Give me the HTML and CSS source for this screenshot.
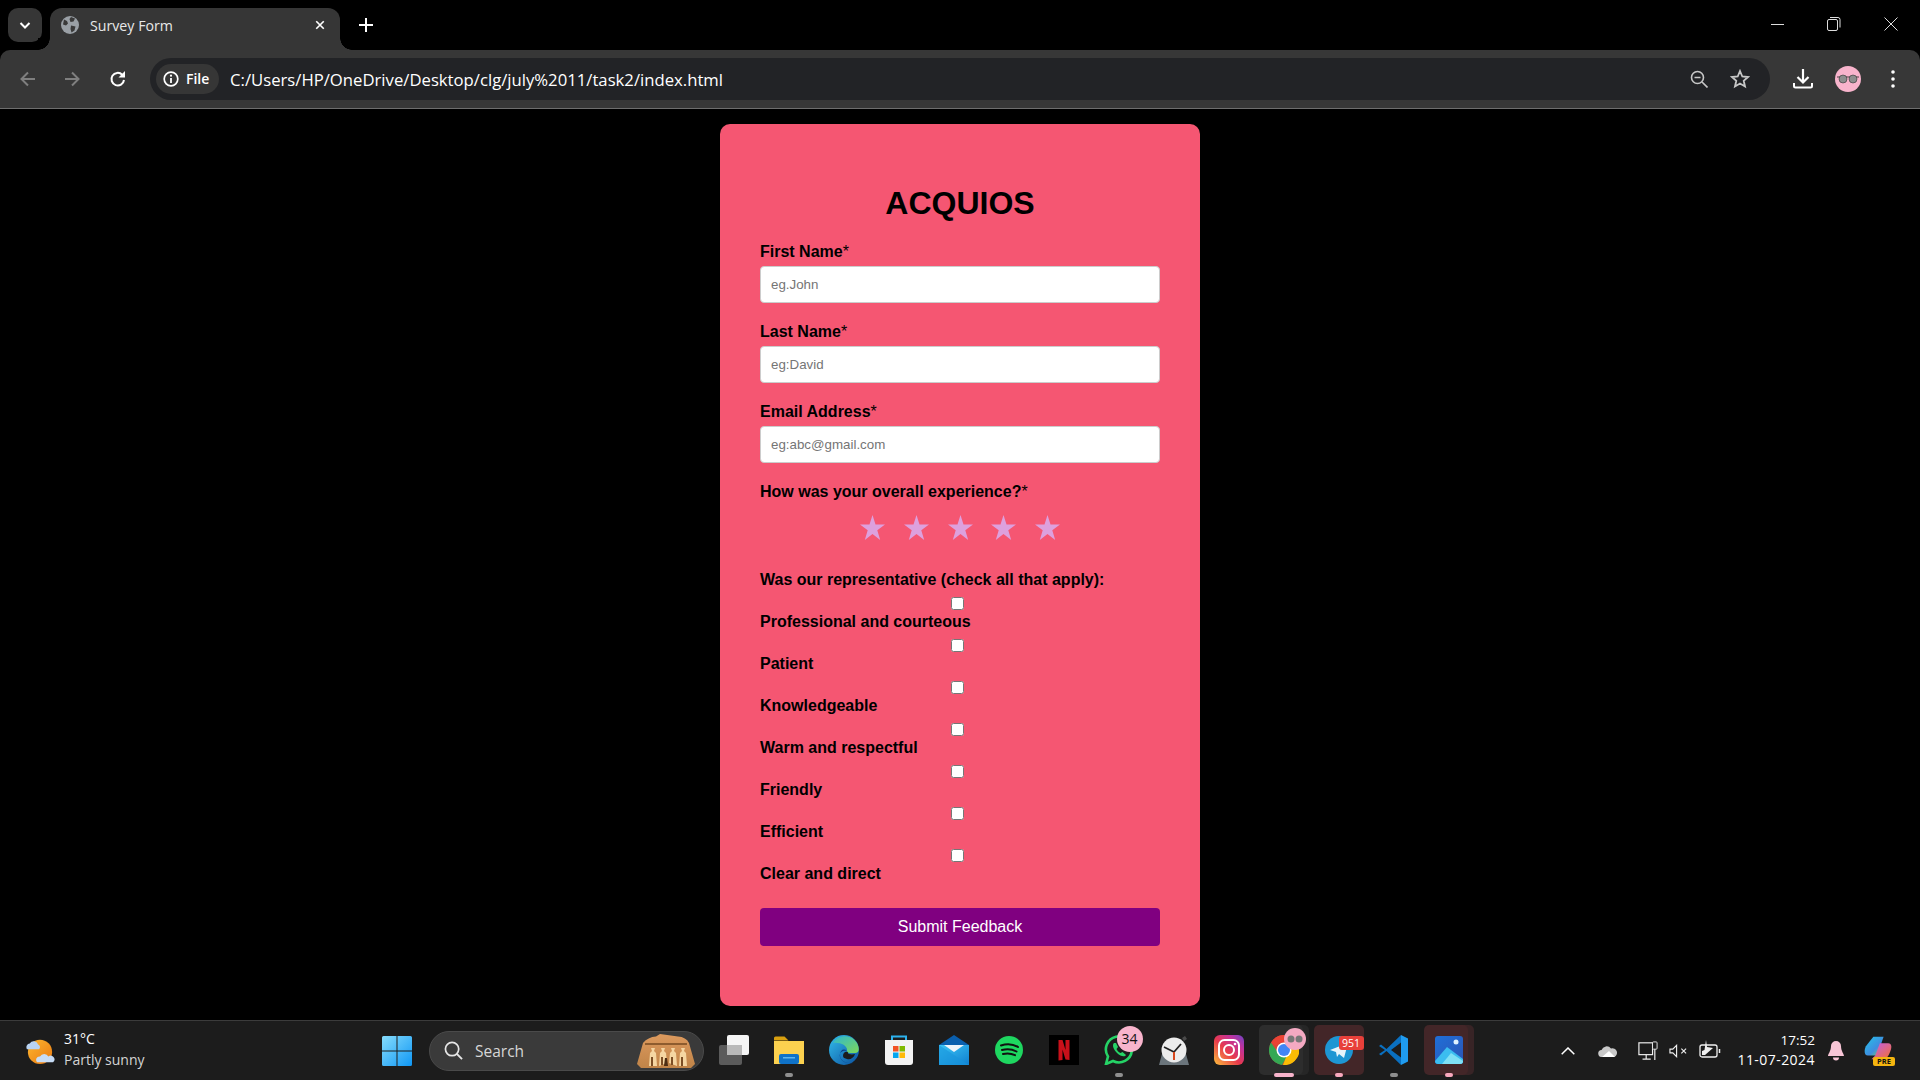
FILE: index.html
```html
<!DOCTYPE html>
<html lang="en">
<head>
<meta charset="utf-8">
<title>Survey Form</title>
<link rel="stylesheet" href="styles.css">
</head>
<body>
<header class="chrome">
  <div class="tabstrip">
    <button class="tabsearch" aria-label="Search tabs">
      <svg class="ic14" viewBox="0 0 14 14"><path d="M2.5 5l4.5 4.5L11.5 5" fill="none" stroke="#fff" stroke-width="2"/></svg>
    </button>
    <div class="tab">
      <svg class="favicon" viewBox="0 0 18 18"><circle cx="9" cy="9" r="9" fill="#9aa0a6"/><path d="M3 3.5l3 1.5 1 2.5-2 2-3-1zM10 1l4 1.5-1.5 3-3 .5-1-3zM10 9.500l4.500 1-1 4-3 2-1-3.500z" fill="#3a3a3a"/></svg>
      <span class="tabtitle">Survey Form</span>
      <svg class="tabclose" viewBox="0 0 12 12"><path d="M1.500 1.500l9 9M10.500 1.500l-9 9" stroke="#fff" stroke-width="2"/></svg>
    </div>
    <svg class="newtab" viewBox="0 0 14 14"><path d="M7 0v14M0 7h14" stroke="#fff" stroke-width="2"/></svg>
    <div class="winctl">
      <svg class="wc wc-min" viewBox="0 0 14 14"><path d="M0 7.500h13" stroke="#ddd" stroke-width="1"/></svg>
      <svg class="wc" viewBox="0 0 14 14"><rect x=".5" y="2.500" width="10" height="11" rx="1.500" fill="none" stroke="#ddd"/><path d="M3 .5h8a2 2 0 0 1 2 2v8" fill="none" stroke="#ddd"/></svg>
      <svg class="wc" viewBox="0 0 14 14"><path d="M.5.5l13 13M13.500.5l-13 13" stroke="#ddd"/></svg>
    </div>
  </div>
  <div class="toolbar">
    <svg class="navic" viewBox="0 0 18 18"><path d="M16 9H3M9 2.500L2.500 9 9 15.500" fill="none" stroke="#7f7f7f" stroke-width="2"/></svg>
    <svg class="navic fwd" viewBox="0 0 18 18"><path d="M2 9h13M9 2.500L15.500 9 9 15.500" fill="none" stroke="#7f7f7f" stroke-width="2"/></svg>
    <svg class="navic reload" viewBox="0 0 18 18"><path d="M15 10a6.300 6.300 0 1 1-1.800-5.300L15 6.500" fill="none" stroke="#fff" stroke-width="2"/><path d="M16 1v6.500H9.500z" fill="#fff"/></svg>
    <div class="omnibox">
      <div class="chip">
        <svg class="info" viewBox="0 0 16 16"><circle cx="8" cy="8" r="6.800" fill="none" stroke="#fff" stroke-width="1.700"/><path d="M8 7v5" stroke="#fff" stroke-width="1.800"/><circle cx="8" cy="4.700" r="1.100" fill="#fff"/></svg>
        <span class="chiptext">File</span>
      </div>
      <span class="url">C:/Users/HP/OneDrive/Desktop/clg/july%2011/task2/index.html</span>
      <svg class="omniic" viewBox="0 0 18 18"><circle cx="7.500" cy="7.500" r="6" fill="none" stroke="#c7c7c7" stroke-width="1.600"/><path d="M4.500 7.500h6M12 12l5.500 5.500" stroke="#c7c7c7" stroke-width="1.600"/></svg>
      <svg class="omniic star" viewBox="0 0 20 20"><path d="M10 2l2.300 5.500 5.700.5-4.300 3.800 1.300 5.700L10 14.500 5 17.500l1.300-5.700L2 8l5.700-.5z" fill="none" stroke="#c7c7c7" stroke-width="1.800"/></svg>
    </div>
    <svg class="dl" viewBox="0 0 20 20"><path d="M10 0v13M4.500 8L10 13.500 15.500 8" fill="none" stroke="#fff" stroke-width="2.200"/><path d="M1 14v3a1.500 1.500 0 0 0 1.500 1.500h15A1.500 1.500 0 0 0 19 17v-3" fill="none" stroke="#fff" stroke-width="2"/></svg>
    <svg class="avatar" viewBox="0 0 26 26"><circle cx="13" cy="13" r="13" fill="#f8b4cc"/><path d="M2 11h22" stroke="#222" stroke-width=".8"/><circle cx="8" cy="13" r="4" fill="#8d8d8d" stroke="#333" stroke-width=".6"/><circle cx="18" cy="13" r="4" fill="#8d8d8d" stroke="#333" stroke-width=".6"/></svg>
    <svg class="dots" viewBox="0 0 4 18"><circle cx="2" cy="2" r="1.800" fill="#fff"/><circle cx="2" cy="9" r="1.800" fill="#fff"/><circle cx="2" cy="16" r="1.800" fill="#fff"/></svg>
  </div>
</header>

<main class="page">
  <form class="card">
    <h1 class="title">ACQUIOS</h1>
    <div class="field">
      <label class="flabel" for="fn">First Name<span class="req">*</span></label>
      <input class="tinput" id="fn" type="text" placeholder="eg.John">
    </div>
    <div class="field">
      <label class="flabel" for="ln">Last Name<span class="req">*</span></label>
      <input class="tinput" id="ln" type="text" placeholder="eg:David">
    </div>
    <div class="field">
      <label class="flabel" for="em">Email Address<span class="req">*</span></label>
      <input class="tinput" id="em" type="email" placeholder="eg:abc@gmail.com">
    </div>
    <div class="qlabel">How was your overall experience?<span class="req">*</span></div>
    <div class="stars">
      <svg class="rstar" viewBox="0 0 25 25"><path d="M12.500 0l3 9.500h9.500l-7.700 5.800 2.900 9.700-7.700-6-7.700 6 2.900-9.700L0 9.500h9.500z"/></svg>
      <svg class="rstar" viewBox="0 0 25 25"><path d="M12.500 0l3 9.500h9.500l-7.700 5.800 2.900 9.700-7.700-6-7.700 6 2.900-9.700L0 9.500h9.500z"/></svg>
      <svg class="rstar" viewBox="0 0 25 25"><path d="M12.500 0l3 9.500h9.500l-7.700 5.800 2.900 9.700-7.700-6-7.700 6 2.900-9.700L0 9.500h9.500z"/></svg>
      <svg class="rstar" viewBox="0 0 25 25"><path d="M12.500 0l3 9.500h9.500l-7.700 5.800 2.900 9.700-7.700-6-7.700 6 2.900-9.700L0 9.500h9.500z"/></svg>
      <svg class="rstar" viewBox="0 0 25 25"><path d="M12.500 0l3 9.500h9.500l-7.700 5.800 2.900 9.700-7.700-6-7.700 6 2.900-9.700L0 9.500h9.500z"/></svg>
    </div>
    <div class="qlabel checkhead">Was our representative (check all that apply):</div>
    <label class="check"><input type="checkbox"><span>Professional and courteous</span></label>
    <label class="check"><input type="checkbox"><span>Patient</span></label>
    <label class="check"><input type="checkbox"><span>Knowledgeable</span></label>
    <label class="check"><input type="checkbox"><span>Warm and respectful</span></label>
    <label class="check"><input type="checkbox"><span>Friendly</span></label>
    <label class="check"><input type="checkbox"><span>Efficient</span></label>
    <label class="check"><input type="checkbox"><span>Clear and direct</span></label>
    <button class="submit" type="button">Submit Feedback</button>
  </form>
</main>

<footer class="taskbar">
  <div class="weather">
    <svg class="wxic" viewBox="0 0 32 30"><defs><linearGradient id="sun" x1="0" y1="0" x2="1" y2="1"><stop offset="0" stop-color="#fdb62f"/><stop offset="1" stop-color="#ea7a12"/></linearGradient></defs><circle cx="16" cy="16" r="13" fill="url(#sun)"/><path d="M2 13a4 4 0 0 1 3-6 5 5 0 0 1 9 1 3 3 0 0 1 1 5z" fill="#b9d3f2"/><path d="M13 27a3.500 3.500 0 0 1 3-6 5 5 0 0 1 9 0 3 3 0 0 1 5 6z" fill="#c7dcf6"/></svg>
    <div class="wxtext"><span class="wxtemp">31°C</span><span class="wxdesc">Partly sunny</span></div>
  </div>
  <div class="start">
    <svg class="ic30" viewBox="0 0 30 30"><defs><linearGradient id="win" x1="0" y1="0" x2="1" y2="1"><stop offset="0" stop-color="#86dcfc"/><stop offset="1" stop-color="#0f97f5"/></linearGradient></defs><path fill="url(#win)" d="M0 1.500A1.500 1.500 0 0 1 1.500 0h13v14.500H0zM15.500 0h13A1.500 1.500 0 0 1 30 1.500v13H15.500zM0 15.500h14.500V30h-13A1.500 1.500 0 0 1 0 28.500zM15.500 15.500H30v13a1.500 1.500 0 0 1-1.500 1.500h-13z"/></svg>
  </div>
  <div class="search">
    <svg class="searchic" viewBox="0 0 20 20"><circle cx="8.500" cy="8.500" r="7" fill="none" stroke="#e6e6e6" stroke-width="1.800"/><path d="M13.500 13.500l5.500 5.500" stroke="#e6e6e6" stroke-width="2"/></svg>
    <span class="searchtext">Search</span>
    <svg class="temple" viewBox="0 0 60 34"><defs><linearGradient id="sand" x1="0" y1="0" x2="0" y2="1"><stop offset="0" stop-color="#dd9a5e"/><stop offset="1" stop-color="#c08448"/></linearGradient></defs><path d="M7 9Q12 3 20 2.500L24 0l18 2.500Q50 3 53 9l6 21-4 4H5l-4-4z" fill="url(#sand)"/><path d="M9 9h42v2H9z" fill="#8e5c2e"/><path d="M13 32l1-13 2-2-1-3h4l-1 3 2 2 1 13zM23 32l1-13 2-2-1-3h4l-1 3 2 2 1 10zM33 29l1-10 2-2-1-3h4l-1 3 2 2 1 13zM43 32l1-13 2-2-1-3h4l-1 3 2 2 1 13z" fill="#f5d6a2"/><path d="M28 32l1-8h2l1 8z" fill="#4d2e14"/><path d="M15 32v-9h2v9zM45 32v-9h2v9zM25 31v-8h2v8zM35 31v-8h2v8z" fill="#7c4e25"/></svg>
  </div>
  <div class="apps">
    <div class="app">
      <svg class="ic30" viewBox="0 0 30 30"><rect x="0" y="10" width="23" height="20" rx="2" fill="#5b5b5b"/><rect x="8" y="0" width="22" height="20" rx="2" fill="#f5f5f5"/><rect x="8" y="10" width="15" height="10" fill="#b9b9b9"/></svg>
    </div>
    <div class="app">
      <svg class="ic30" viewBox="0 0 30 30"><path d="M0 3a1.500 1.500 0 0 1 1.500-1.500h9l4 4H0z" fill="#d9a00f"/><path d="M0 6h30v23H0z" fill="#fcd14f"/><rect x="5" y="19" width="20" height="10" rx="2" fill="#0f72c8"/><rect x="9" y="22" width="12" height="1.500" fill="#5cb5ef"/></svg>
      <i class="pip"></i>
    </div>
    <div class="app">
      <svg class="ic30" viewBox="0 0 30 30"><defs><linearGradient id="edg" x1="0" y1="0" x2="1" y2="1"><stop offset="0" stop-color="#33bdec"/><stop offset="1" stop-color="#0a4f9e"/></linearGradient><linearGradient id="edg2" x1="0" y1="0" x2="1" y2="1"><stop offset="0" stop-color="#2fb7cf"/><stop offset="1" stop-color="#7ed957"/></linearGradient></defs><circle cx="15" cy="15" r="15" fill="url(#edg)"/><path d="M4 8C8 0 22-2 28 8c3 6 2 10-2 10-6 0-8 0-8-2 1-5-6-9-14-8z" fill="url(#edg2)"/><path d="M18 16c-5-1-8 2-7 6s6 7 13 6c-8 1-13-3-13-8 0-5 4-7 7-4z" fill="#0b3f86"/><path d="M14 21c0-3 2-5 5-4-1 2 3 3 7 2-1 4-5 6-8 5-2-.5-4-1-4-3z" fill="#1c1c1c"/></svg>
    </div>
    <div class="app">
      <svg class="ic30" viewBox="0 0 30 30"><path d="M8 5V1.500h14V5" fill="none" stroke="#2cb2ee" stroke-width="2"/><path d="M1 5h28v22a3 3 0 0 1-3 3H4a3 3 0 0 1-3-3z" fill="#f3f3f3"/><rect x="9" y="11" width="5.500" height="5.500" fill="#f25325"/><rect x="15.500" y="11" width="5.500" height="5.500" fill="#7fba00"/><rect x="9" y="17.500" width="5.500" height="5.500" fill="#05a6f0"/><rect x="15.500" y="17.500" width="5.500" height="5.500" fill="#ffba08"/></svg>
    </div>
    <div class="app">
      <svg class="ic30" viewBox="0 0 30 30"><defs><linearGradient id="ml" x1="0" y1="0" x2="1" y2="1"><stop offset="0" stop-color="#3cc6f6"/><stop offset="1" stop-color="#0f7fd0"/></linearGradient></defs><path d="M15 0l15 10H0z" fill="#0a5fae"/><path d="M0 10h30v20H0z" fill="url(#ml)"/><path d="M5 10h20l-10 7z" fill="#eef4fa"/><path d="M0 10l30 20H0z" fill="#1795dc" opacity=".6"/></svg>
    </div>
    <div class="app">
      <svg class="ic30" viewBox="0 0 30 30"><circle cx="15" cy="15" r="14" fill="#1ed760"/><path d="M7 10.500c6-2 12-1.500 17 1.500M8 15c5-1.500 10-1 14.500 1.500M9 19c4-1 8-.8 12 1.200" fill="none" stroke="#111" stroke-width="2" stroke-linecap="round"/></svg>
    </div>
    <div class="app">
      <svg class="ic30" viewBox="0 0 30 30"><rect width="30" height="30" fill="#000"/><path d="M9.500 5h4l3 10V5h4v20l-4-.5-3-10V25l-4 .5z" fill="#c8101a"/></svg>
    </div>
    <div class="app">
      <svg class="ic30" viewBox="0 0 30 30"><path d="M2 29l2-7.500A13 13 0 1 1 9 26z" fill="none" stroke="#25d366" stroke-width="2.600"/><path d="M10 8c-2 2-1 6 3 10s8 4 9 2l-3.500-3-2 1c-2-1-3.500-2.500-4-4l1.500-2-2-4z" fill="#25d366"/></svg>
      <span class="badge wa">34</span>
      <i class="pip"></i>
    </div>
    <div class="app">
      <svg class="ic30" viewBox="0 0 30 30"><path d="M23 3l3-2 2 3-3 2z" fill="#4a4a4a"/><path d="M6 8L0 30h30L24 8z" fill="#6b757c"/><circle cx="15" cy="15" r="12.500" fill="#ececec"/><path d="M15 17L5 12M15 17l7-8" stroke="#222" stroke-width="1.800"/><path d="M15 17v8" stroke="#d8481e" stroke-width="2"/></svg>
    </div>
    <div class="app">
      <svg class="ic30" viewBox="0 0 30 30"><defs><linearGradient id="ig" x1="0" y1="1" x2="1" y2="0"><stop offset="0" stop-color="#fdc13b"/><stop offset=".45" stop-color="#e8394c"/><stop offset=".75" stop-color="#c1329c"/><stop offset="1" stop-color="#6a44c8"/></linearGradient></defs><rect width="30" height="30" rx="6" fill="url(#ig)"/><rect x="5" y="5" width="20" height="20" rx="5.500" fill="none" stroke="#fff" stroke-width="2"/><circle cx="15" cy="15" r="5" fill="none" stroke="#fff" stroke-width="2"/><circle cx="21" cy="9" r="1.300" fill="#fff"/></svg>
    </div>
    <div class="app">
      <i class="hl hl-gray"></i>
      <svg class="ic30 above" viewBox="0 0 30 30"><circle cx="15" cy="15" r="15" fill="#db4437"/><path d="M2 8a15 15 0 0 1 26-1H15a8 8 0 0 0-7 4z" fill="#ea4335"/><path d="M2 7.500A15 15 0 0 0 13 30l6-10-8 .5z" fill="#34a853"/><path d="M28 7H15l6 5-7 18A15 15 0 0 0 28 7z" fill="#fbbc05"/><circle cx="15" cy="15" r="7.500" fill="#fff"/><circle cx="15" cy="15" r="6" fill="#4285f4"/></svg>
      <svg class="avbadge" viewBox="0 0 22 22"><circle cx="11" cy="11" r="11" fill="#f4a9c2"/><circle cx="7" cy="11" r="3.500" fill="#777"/><circle cx="15" cy="11" r="3.500" fill="#777"/></svg>
      <i class="pip pip-wide"></i>
    </div>
    <div class="app">
      <i class="hl hl-red"></i>
      <svg class="ic30 above" viewBox="0 0 30 30"><circle cx="15" cy="15" r="14" fill="#1e96d3"/><path d="M6 15l18-7-4 15-5-4-2 3-1-5z" fill="#e8f5fb"/></svg>
      <span class="badge tg">951</span>
      <i class="pip pip-pink"></i>
    </div>
    <div class="app">
      <svg class="ic30" viewBox="0 0 30 30"><path d="M22 0l7 3.500v23L22 30z" fill="#1f9cf0"/><path d="M22 0L7.500 14 2 9.500 0 11l6 4-6 4 2 1.500 5.500-4.500L22 30v-7.500L12 15 22 7.500z" fill="#0a70c0"/></svg>
      <i class="pip"></i>
    </div>
    <div class="app">
      <i class="hl hl-red hl-stack"></i>
      <svg class="ic30 above" viewBox="0 0 30 30"><defs><linearGradient id="ph" x1="0" y1="0" x2="1" y2="1"><stop offset="0" stop-color="#1f6fd8"/><stop offset="1" stop-color="#2c55b5"/></linearGradient></defs><rect x="1" y="1" width="28" height="28" rx="3" fill="url(#ph)"/><circle cx="22" cy="7" r="2.500" fill="#dff2ff"/><path d="M1 26l12-14 16 12v2a3 3 0 0 1-3 3H4a3 3 0 0 1-3-3z" fill="#3bbdf0"/><path d="M8 29l9-11 12 8a3 3 0 0 1-3 3z" fill="#7fe0f5"/></svg>
      <i class="pip pip-pink"></i>
    </div>
  </div>
  <div class="tray">
    <svg class="t-chev" viewBox="0 0 14 8"><path d="M.7 7.300L7 1l6.300 6.300" fill="none" stroke="#fff" stroke-width="1.500"/></svg>
    <svg class="t-cloud" viewBox="0 0 20 12"><path d="M4 12a3.500 3.500 0 0 1-.5-7A5.500 5.500 0 0 1 13 3.500 4.200 4.200 0 0 1 16 12z" fill="#c9c9c9"/><path d="M4 12l7-6 6 6z" fill="#fff"/></svg>
    <svg class="t-net" viewBox="0 0 22 22"><rect x="1" y="2" width="15" height="13" fill="none" stroke="#f0f0f0" stroke-width="1.300"/><path d="M5 20h9M9 15v5" stroke="#f0f0f0" stroke-width="1.300"/><rect x="16" y="1" width="5" height="8" rx="1" fill="#1c1c1c" stroke="#f0f0f0"/><path d="M18.500 9v12" stroke="#f0f0f0" stroke-width="1.300"/></svg>
    <svg class="t-vol" viewBox="0 0 20 14"><path d="M1 5h3l4-4v12l-4-4H1z" fill="none" stroke="#f0f0f0" stroke-width="1.200"/><path d="M13 4.500l5 5M18 4.500l-5 5" stroke="#f0f0f0" stroke-width="1.200"/></svg>
    <svg class="t-bat" viewBox="0 0 22 18"><rect x="1" y="5" width="17" height="12" rx="2" fill="none" stroke="#f0f0f0" stroke-width="1.300"/><path d="M20.500 9v4" stroke="#f0f0f0" stroke-width="1.500"/><path d="M3 15v-4l2.500-1L7 0l1 7 6 1-8 7z" fill="#f0f0f0"/></svg>
    <div class="clock"><span>17:52</span><span class="cdate">11-07-2024</span></div>
    <svg class="t-bell" viewBox="0 0 16 20"><path d="M8 0a5 5 0 0 1 5 5c0 5 3 8 3 10H0c0-2 3-5 3-10a5 5 0 0 1 5-5z" fill="#f8c5d6"/><path d="M5 16.500a3 3 0 0 0 6 0z" fill="#f8c5d6"/></svg>
    <div class="copilot">
      <svg class="t-cop" viewBox="0 0 30 24"><defs><linearGradient id="c1" x1="0" y1="0" x2="1" y2="1"><stop offset="0" stop-color="#23c5e8"/><stop offset=".6" stop-color="#3f8de0"/><stop offset="1" stop-color="#7ed957"/></linearGradient><linearGradient id="c2" x1="0" y1="0" x2="1" y2="1"><stop offset="0" stop-color="#c05cf0"/><stop offset="1" stop-color="#f5702e"/></linearGradient></defs><path d="M10 0h11l-7 20H4C0 20 0 14 2 10z" fill="url(#c1)"/><path d="M17 7h9c4 0 4 5 2 9-2 5-4 8-8 8H8l4-4z" fill="url(#c2)"/></svg>
      <span class="pre">PRE</span>
    </div>
  </div>
</footer>
</body>
</html>
```
FILE: styles.css
```css
* { box-sizing: border-box; }
html, body { margin: 0; height: 100%; }
body {
  width: 1920px;
  height: 1080px;
  overflow: hidden;
  display: flex;
  flex-direction: column;
  background: #000;
  font-family: "Liberation Sans", Arial, sans-serif;
}
svg { display: block; flex: none; }

/* browser chrome */
.chrome { flex: none; font-family: "Open Sans", "Noto Sans", sans-serif; color: #fff; }
.tabstrip { height: 50px; display: flex; align-items: flex-start; background: #000; position: relative; }
.tabsearch {
  width: 34px; height: 34px; margin: 8px 0 0 8px; padding: 0; border: 0;
  border-radius: 10px; background: #363636;
  display: flex; align-items: center; justify-content: center;
}
.ic14 { width: 14px; height: 14px; }
.tab {
  width: 290px; height: 42px; margin: 8px 0 0 8px; padding: 0 15px 8px 11px;
  background: #363636; border-radius: 12px 12px 0 0;
  display: flex; align-items: center; position: relative;
}
.tab::before, .tab::after {
  content: ""; position: absolute; bottom: 0; width: 12px; height: 12px;
}
.tab::before { left: -12px; background: radial-gradient(circle at 0 0, #000 11.500px, #363636 12px); }
.tab::after { right: -12px; background: radial-gradient(circle at 100% 0, #000 11.500px, #363636 12px); }
.favicon { width: 18px; height: 18px; }
.tabtitle { margin-left: 11px; flex: 1; font-size: 14.200px; color: #e8e8e8; }
.tabclose { width: 10px; height: 10px; }
.newtab { width: 14px; height: 14px; margin: 18px 0 0 19px; }
.winctl { margin-left: auto; display: flex; padding: 17px 22px 0 0; gap: 43px; }
.wc { width: 14px; height: 14px; }
.wc-min { margin-right: -1px; }

.toolbar {
  height: 59px; background: #373737; border-radius: 10px 10px 0 0;
  border-bottom: 1px solid #6e6e6e;
  display: flex; align-items: center; padding-bottom: 1px;
}
.navic { width: 18px; height: 18px; margin-left: 19px; }
.fwd { margin-left: 26px; }
.reload { margin-left: 28px; }
.omnibox {
  width: 1620px; height: 42px; margin-left: 23px;
  background: #222326; border-radius: 21px;
  display: flex; align-items: center; padding: 0 20px 0 6px;
}
.chip {
  width: 63px; height: 30px; border-radius: 15px; background: #363636;
  display: flex; align-items: center; padding-left: 7px; gap: 7px;
}
.info { width: 16px; height: 16px; }
.chiptext { font-size: 14px; font-weight: 600; }
.url { margin: 2px 0 0 11px; flex: 1; font-size: 16.700px; white-space: nowrap; }
.omniic { width: 18px; height: 18px; }
.star { width: 20px; height: 20px; margin-left: 22px; }
.dl { width: 20px; height: 20px; margin-left: 23px; }
.avatar { width: 26px; height: 26px; margin-left: 21.500px; }
.dots { width: 4px; height: 18px; margin-left: 30.500px; }

/* survey form */
.page { flex: 1; padding-top: 15px; display: flex; justify-content: center; background: #000; min-height: 0; }
.card {
  width: 480px; height: 882px; padding: 40px; background: #f55672;
  border-radius: 10px; color: #000;
}
.title { margin: 21px 0; font-size: 32px; line-height: 37px; text-align: center; font-weight: bold; }
.field { margin-bottom: 20px; }
.flabel, .qlabel { display: block; font-size: 16px; line-height: 18px; font-weight: bold; }
.flabel { margin-bottom: 5px; }
.req { font-weight: normal; }
.tinput {
  display: block; width: 400px; height: 37px; padding: 10px;
  border: 1px solid #ccc; border-radius: 4px; background: #fff;
  font-family: "Liberation Sans", Arial, sans-serif; font-size: 13.333px;
}
.tinput::placeholder { color: #757575; }
.stars {
  height: 70px; padding-top: 14px; display: flex; justify-content: center; align-items: flex-start; gap: 18.700px;
}
.rstar { width: 25px; height: 25px; fill: #dda0dd; }
.checkhead { margin-bottom: 8px; }
.check { display: flex; flex-direction: column; margin-bottom: 8px; font-size: 16px; line-height: 18px; font-weight: bold; }
.check input { width: 13px; height: 13px; margin: 0 5px 3px 0; align-self: center; }
.submit {
  display: block; width: 400px; height: 38px; margin-top: 25px; padding: 0; border: 0;
  border-radius: 4px; background: #800080; color: #fff;
  font-family: "Liberation Sans", Arial, sans-serif; font-size: 16px;
}

/* taskbar */
.taskbar {
  flex: none; height: 60px; background: #1c1c1c; border-top: 1px solid #3b3b3b;
  display: flex; align-items: center; font-family: "Open Sans", "Noto Sans", sans-serif; color: #fff;
}
.weather { width: 369.500px; padding-left: 25px; display: flex; align-items: center; gap: 9px; }
.wxic { width: 30px; height: 28px; }
.wxtext { display: flex; flex-direction: column; margin-top: -4px; font-size: 14px; line-height: 21px; }
.wxdesc { color: #d4d4d4; }
.start { width: 55px; display: flex; justify-content: center; }
.ic30 { width: 30px; height: 30px; }
.search {
  width: 275px; height: 40px; margin-left: 4.500px; border-radius: 20px;
  background: #3a3a3a; border: 1px solid #4a4a4a;
  display: flex; align-items: center; padding-left: 14px;
}
.searchic { width: 19px; height: 19px; }
.searchtext { margin-left: 12px; flex: 1; font-size: 15.500px; color: #d6d6d6; }
.temple { width: 60px; height: 34px; margin-right: 7px; }
.apps { display: flex; margin-left: 2.500px; }
.app { width: 55px; height: 59px; padding-bottom: 2px; position: relative; display: flex; align-items: center; justify-content: center; }
.above { position: relative; }
.pip {
  position: absolute; bottom: 3px; left: 23.500px; width: 8px; height: 4px;
  border-radius: 2px; background: #8f8f8f;
}
.pip-pink { background: #f8a8bd; }
.pip-wide { width: 20px; left: 17.500px; background: #f8b4cc; }
.hl { position: absolute; top: 4px; left: 2.500px; width: 44px; height: 50px; border-radius: 5px; }
.hl-gray { background: #2d2d2d; box-shadow: 6px 0 0 #262626; }
.hl-red { background: #432628; width: 50px; }
.hl-stack { width: 44px; box-shadow: 6px 0 0 #382426; }
.badge {
  position: absolute; display: flex; align-items: center; justify-content: center; line-height: 1;
}
.wa {
  left: 25px; top: 5px; width: 26px; height: 26px; border-radius: 50%;
  background: #f8b4cc; color: #111; font-size: 14px;
}
.tg {
  left: 27px; top: 15px; width: 25px; height: 14px; border-radius: 3px;
  background: #e8403a; color: #fff; font-size: 10.500px;
}
.avbadge { position: absolute; left: 27px; top: 7px; width: 22px; height: 22px; }
.tray { display: flex; align-items: center; margin-left: 81.500px; }
.t-chev { width: 14px; height: 8px; margin-left: 3px; margin-right: 3px; }
.t-cloud { width: 20px; height: 12px; margin-left: 20px; }
.t-net { width: 20px; height: 20px; margin-left: 20px; }
.t-vol { width: 19px; height: 14px; margin-left: 11px; }
.t-bat { width: 22px; height: 18px; margin-top: -3px; margin-left: 11px; }
.clock {
  width: 90px; margin-left: 4px; margin-top: -2px; display: flex; flex-direction: column; align-items: flex-end;
  font-size: 13.500px; line-height: 20px;
}
.cdate { font-size: 14px; letter-spacing: .45px; }
.t-bell { width: 16px; height: 20px; margin-left: 13px; }
.copilot { width: 30px; height: 30px; margin-left: 20px; position: relative; }
.t-cop { width: 28px; height: 24px; }
.pre {
  position: absolute; right: -1px; bottom: 0; width: 22px; height: 9px; border-radius: 2px;
  background: #f5b50f; color: #111; font-size: 7.500px; font-weight: 700; line-height: 9px; text-align: center;
}
```
